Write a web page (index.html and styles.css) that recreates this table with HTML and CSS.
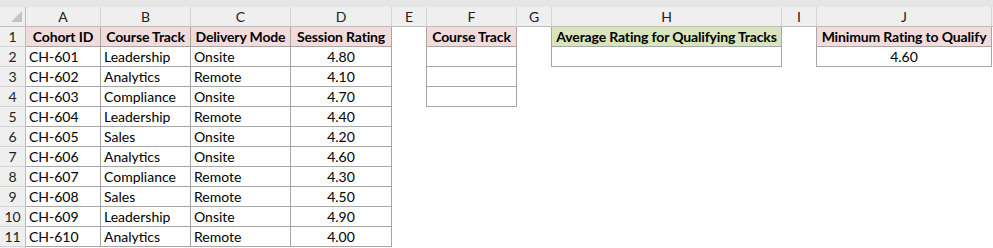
FILE: index.html
```html
<!DOCTYPE html>
<html>
<head>
<meta charset="utf-8">
<link rel="stylesheet" href="styles.css">
</head>
<body>
<div class="sheet">
  <div class="strip"></div>
  <div class="row colhead">
    <div class="corner"><span class="tri"></span></div>
    <div class="ch">A</div><div class="ch">B</div><div class="ch">C</div><div class="ch">D</div><div class="ch">E</div><div class="ch">F</div><div class="ch">G</div><div class="ch">H</div><div class="ch">I</div><div class="ch">J</div><div class="ch rest"></div>
  </div>
  <div class="row">
    <div class="rh">1</div>
    <div class="c b hd pink">Cohort ID</div><div class="c b hd pink">Course Track</div><div class="c b hd pink">Delivery Mode</div><div class="c b hd pink">Session Rating</div>
    <div class="c br"></div><div class="c b hd pink">Course Track</div><div class="c br"></div><div class="c b hd green">Average Rating for Qualifying Tracks</div><div class="c br"></div><div class="c b hd pink">Minimum Rating to Qualify</div><div class="c"></div>
  </div>
  <div class="row">
    <div class="rh">2</div>
    <div class="c b">CH-601</div><div class="c b">Leadership</div><div class="c b">Onsite</div><div class="c b num">4.80</div>
    <div class="c br"></div><div class="c b"></div><div class="c br"></div><div class="c b"></div><div class="c br"></div><div class="c b num">4.60</div><div class="c"></div>
  </div>
  <div class="row">
    <div class="rh">3</div>
    <div class="c b">CH-602</div><div class="c b">Analytics</div><div class="c b">Remote</div><div class="c b num">4.10</div>
    <div class="c br"></div><div class="c b"></div><div class="c"></div><div class="c"></div><div class="c"></div><div class="c"></div><div class="c"></div>
  </div>
  <div class="row">
    <div class="rh">4</div>
    <div class="c b">CH-603</div><div class="c b">Compliance</div><div class="c b">Onsite</div><div class="c b num">4.70</div>
    <div class="c br"></div><div class="c b"></div><div class="c"></div><div class="c"></div><div class="c"></div><div class="c"></div><div class="c"></div>
  </div>
  <div class="row">
    <div class="rh">5</div>
    <div class="c b">CH-604</div><div class="c b">Leadership</div><div class="c b">Remote</div><div class="c b num">4.40</div>
  </div>
  <div class="row">
    <div class="rh">6</div>
    <div class="c b">CH-605</div><div class="c b">Sales</div><div class="c b">Onsite</div><div class="c b num">4.20</div>
  </div>
  <div class="row">
    <div class="rh">7</div>
    <div class="c b">CH-606</div><div class="c b">Analytics</div><div class="c b">Onsite</div><div class="c b num">4.60</div>
  </div>
  <div class="row">
    <div class="rh">8</div>
    <div class="c b">CH-607</div><div class="c b">Compliance</div><div class="c b">Remote</div><div class="c b num">4.30</div>
  </div>
  <div class="row">
    <div class="rh">9</div>
    <div class="c b">CH-608</div><div class="c b">Sales</div><div class="c b">Remote</div><div class="c b num">4.50</div>
  </div>
  <div class="row">
    <div class="rh">10</div>
    <div class="c b">CH-609</div><div class="c b">Leadership</div><div class="c b">Onsite</div><div class="c b num">4.90</div>
  </div>
  <div class="row">
    <div class="rh">11</div>
    <div class="c b">CH-610</div><div class="c b">Analytics</div><div class="c b">Remote</div><div class="c b num">4.00</div>
  </div>
  <div class="row">
    <div class="rh last"></div>
  </div>
</div>
</body>
</html>
```

FILE: styles.css
```css
html, body {
  margin: 0;
  padding: 0;
  background: #ffffff;
}
.sheet {
  width: 993px;
  height: 248px;
  overflow: hidden;
  font-family: "Lato", "Liberation Sans", sans-serif;
  font-size: 14px;
  color: #000;
}
.strip {
  height: 7px;
  background: #e6e6e6;
}
.row {
  display: grid;
  grid-template-columns: 26px 75px 90px 100px 101px 35px 90px 35px 230px 35px 175px 1fr;
  height: 20px;
}
.colhead {
  background: #efefef;
}
.corner {
  position: relative;
  box-sizing: border-box;
  border-right: 1px solid #bdbdbd;
  border-bottom: 1px solid #bdbdbd;
}
.tri {
  position: absolute;
  right: 3px;
  bottom: 4px;
  width: 11px;
  height: 11px;
  background: #c4c4c4;
  clip-path: polygon(100% 0, 100% 100%, 0 100%);
}
.ch {
  box-sizing: border-box;
  border-right: 1px solid #d4d4d4;
  border-bottom: 1px solid #bdbdbd;
  text-align: center;
  line-height: 19px;
  color: #222;
}
.ch.rest {
  border-right: none;
}
.rh {
  box-sizing: border-box;
  background: #efefef;
  border-right: 1px solid #bdbdbd;
  border-bottom: 1px solid #d4d4d4;
  text-align: center;
  line-height: 19px;
  color: #222;
}
.rh.last {
  border-bottom: none;
}
.c {
  box-sizing: border-box;
  line-height: 20px;
  padding: 0 3px;
  white-space: nowrap;
  overflow: hidden;
}
.c.b {
  border-right: 1px solid #a6a6a6;
  border-bottom: 1px solid #a6a6a6;
  line-height: 19px;
}
.c.br {
  border-right: 1px solid #a6a6a6;
}
.hd {
  font-weight: bold;
  text-align: center;
  letter-spacing: -0.15px;
  padding: 0;
}
.num {
  text-align: center;
}
.pink {
  background: #f2dcdb;
}
.green {
  background: #d8e4bc;
}
```
